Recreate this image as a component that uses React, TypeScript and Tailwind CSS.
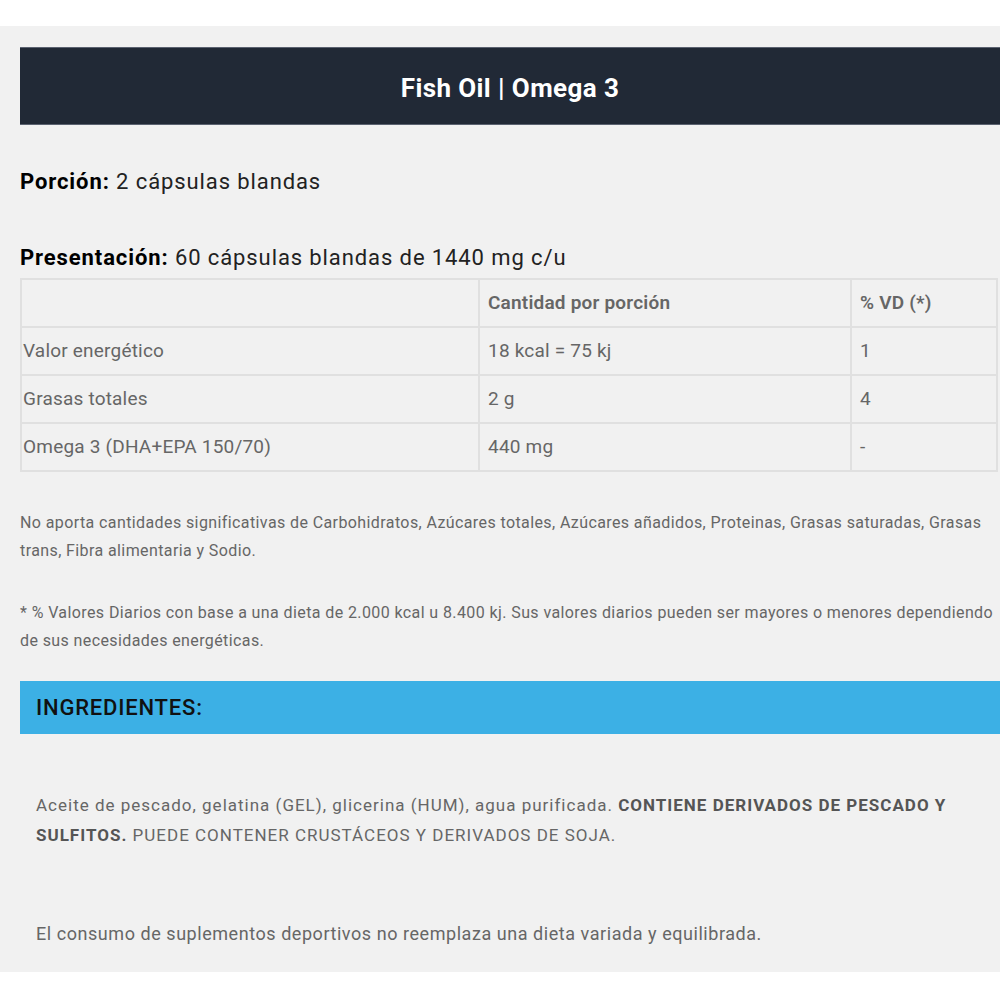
import React from 'react';

const rows = [
  { name: 'Valor energético', qty: '18 kcal = 75 kj', vd: '1' },
  { name: 'Grasas totales', qty: '2 g', vd: '4' },
  { name: 'Omega 3 (DHA+EPA 150/70)', qty: '440 mg', vd: '-' },
];

const App: React.FC = () => {
  return (
    <div className="w-[1000px] h-[1000px] bg-white pt-[26px] font-['Roboto',sans-serif]">
      <div className="bg-[#f1f1f1] pl-5 pt-[21px] pb-[23px]">
        {/* Title */}
        <div className="h-[78px] bg-[#212936] border-y border-[#5b6270] flex items-center justify-center pt-1">
          <h1 className="text-[26px] font-bold text-white tracking-[0.4px]">Fish Oil | Omega 3</h1>
        </div>

        <p className="mt-[43px] text-[22px] leading-[28px] text-[#222] tracking-[0.9px]">
          <span className="font-bold text-black">Porción:</span> 2 cápsulas blandas
        </p>
        <p className="mt-[48px] text-[22px] leading-[28px] text-[#222] tracking-[0.9px]">
          <span className="font-bold text-black">Presentación:</span> 60 cápsulas blandas de 1440 mg c/u
        </p>

        {/* Nutrition table */}
        <table className="mt-[6px] w-[978px] border-collapse text-[19px] text-[#666] tracking-[0.2px]">
          <thead>
            <tr className="h-[48px]">
              <th className="w-[458px] border-2 border-[#e0e0e0]"></th>
              <th className="w-[372px] border-2 border-[#e0e0e0] text-left font-semibold pl-2">Cantidad por porción</th>
              <th className="border-2 border-[#e0e0e0] text-left font-semibold pl-2">% VD (*)</th>
            </tr>
          </thead>
          <tbody>
            {rows.map((r) => (
              <tr key={r.name} className="h-[48px]">
                <td className="border-2 border-[#e0e0e0] pl-[1px]">{r.name}</td>
                <td className="border-2 border-[#e0e0e0] pl-2">{r.qty}</td>
                <td className="border-2 border-[#e0e0e0] pl-2">{r.vd}</td>
              </tr>
            ))}
          </tbody>
        </table>

        <p className="mt-[37px] text-[16px] leading-[28px] text-[#666] tracking-[0.4px]">
          No aporta cantidades significativas de Carbohidratos, Azúcares totales, Azúcares añadidos, Proteinas, Grasas saturadas, Grasas trans, Fibra alimentaria y Sodio.
        </p>
        <p className="mt-[34px] text-[16px] leading-[28px] text-[#666] tracking-[0.4px]">
          * % Valores Diarios con base a una dieta de 2.000 kcal u 8.400 kj. Sus valores diarios pueden ser mayores o menores dependiendo de sus necesidades energéticas.
        </p>

        {/* Ingredients */}
        <div className="mt-[26px] h-[53px] bg-[#3cb0e5] flex items-center pl-4">
          <h2 className="text-[22px] font-medium text-[#111] tracking-[0.8px]">INGREDIENTES:</h2>
        </div>

        <p className="mt-[56px] pl-4 text-[17px] leading-[30px] text-[#666] tracking-[1px]">
          Aceite de pescado, gelatina (GEL), glicerina (HUM), agua purificada.{' '}
          <span className="font-bold text-[#555]">CONTIENE DERIVADOS DE PESCADO Y SULFITOS.</span> PUEDE CONTENER CRUSTÁCEOS Y DERIVADOS DE SOJA.
        </p>

        <p className="mt-[69px] pl-4 text-[18px] leading-[30px] text-[#666] tracking-[0.55px]">
          El consumo de suplementos deportivos no reemplaza una dieta variada y equilibrada.
        </p>
      </div>
    </div>
  );
};

export default App;
